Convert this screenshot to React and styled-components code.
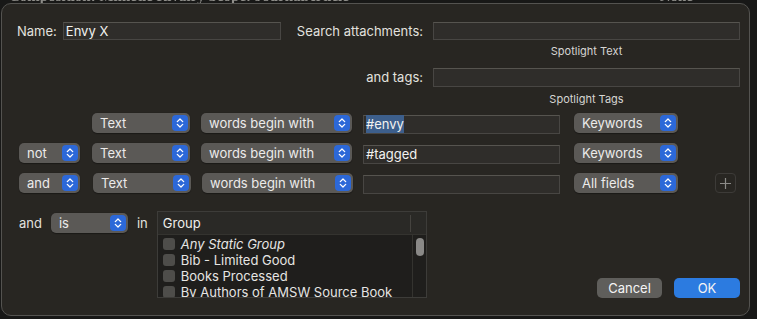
import React from 'react'
import styled, { createGlobalStyle } from 'styled-components'

const Global = createGlobalStyle`
  html, body {
    margin: 0;
    background: #181817;
    font-family: Inter, "Noto Sans", sans-serif;
    font-size: 13px;
    color: #e4e3e1;
    -webkit-font-smoothing: antialiased;
  }
`

const Page = styled.div`
  width: 757px;
  height: 319px;
  overflow: hidden;
`

// the window behind the sheet, only its last pixels show
const BehindStrip = styled.div`
  height: 3px;
  overflow: hidden;
  font-family: "Liberation Serif", serif;
  font-weight: bold;
  font-size: 15px;
  color: #8f8e8a;
  filter: blur(0.4px);
  white-space: nowrap;
`

const BehindLine = styled.div`
  display: flex;
  margin-top: -11px;
  padding-left: 9px;
  line-height: 14px;
  span:last-child {
    margin-left: auto;
    margin-right: 64px;
  }
`

const Sheet = styled.div`
  margin-left: 1px;
  width: 749px;
  height: 313px;
  box-sizing: border-box;
  background: #282622;
  border: 1px solid #545350;
  border-radius: 10px;
  padding: 18px 9px 0 13px;
  display: flex;
  flex-direction: column;
`

const TopGrid = styled.div`
  display: grid;
  grid-template-columns: auto 218px 1fr 307px;
  grid-template-rows: 18px 28px 19px 26px;
  column-gap: 6px;
  margin-left: 2px;
`

const Label = styled.div`
  color: #e2e1df;
  line-height: ${p => p.$lh || 18}px;
  white-space: nowrap;
  text-align: ${p => (p.$right ? 'right' : 'left')};
  padding-right: ${p => p.$pr || 0}px;
`

const Caption = styled.div`
  grid-column: 4;
  font-size: 11px;
  line-height: 14px;
  text-align: center;
  color: #d6d5d2;
  padding-top: ${p => p.$pt}px;
`

const Field = styled.div`
  box-sizing: border-box;
  height: ${p => p.$h || 19}px;
  margin-top: ${p => p.$mt || 0}px;
  background: #2f2d2a;
  border: 1px solid #484643;
  border-top-color: #56544f;
  padding: 0 2px;
  line-height: ${p => (p.$h || 19) - 2}px;
  color: #f2f2f0;
  font-size: 13px;
  white-space: nowrap;
`

const Selected = styled.span`
  background: #3d5f8c;
  padding: 1px 0;
`

const Criteria = styled.div`
  display: flex;
  flex-direction: column;
  gap: 10px;
  margin-left: 4px;
`

const CritRow = styled.div`
  display: flex;
  align-items: flex-start;
  height: 20px;
`

const Slot = styled.div`
  width: ${p => p.$w}px;
  margin-left: ${p => p.$ml || 0}px;
  flex: none;
`

const PopupBox = styled.div`
  box-sizing: border-box;
  width: ${p => p.$w}px;
  height: 20px;
  margin-top: ${p => p.$mt || 0}px;
  border-radius: 5px;
  background: #5b5956;
  box-shadow: 0 0.5px 1px rgba(0, 0, 0, 0.35);
  display: flex;
  align-items: center;
  justify-content: space-between;
  padding: 0 2px 0 8px;
  color: #ecebea;
  font-size: 13px;
  white-space: nowrap;
  flex: none;
`

const Stepper = () => (
  <svg width="16" height="16" viewBox="0 0 16 16">
    <rect x="0" y="0" width="16" height="16" rx="4" fill="#2c68d8" />
    <path d="M5.3 6.6 L8 4 L10.7 6.6" fill="none" stroke="#fff" strokeWidth="1.3" strokeLinecap="round" strokeLinejoin="round" />
    <path d="M5.3 9.4 L8 12 L10.7 9.4" fill="none" stroke="#fff" strokeWidth="1.3" strokeLinecap="round" strokeLinejoin="round" />
  </svg>
)

const Popup = ({ w, mt, children }) => (
  <PopupBox $w={w} $mt={mt}>
    <span>{children}</span>
    <Stepper />
  </PopupBox>
)

const PlusButton = styled.div`
  box-sizing: border-box;
  width: 21px;
  height: 20px;
  margin-left: 37px;
  border: 1px solid #3d3b38;
  border-radius: 4px;
  display: flex;
  align-items: center;
  justify-content: center;
`

const Bottom = styled.div`
  display: flex;
  align-items: flex-start;
  margin-top: 18px;
  margin-left: 4px;
`

const Table = styled.div`
  box-sizing: border-box;
  width: 270px;
  height: 87px;
  margin-left: 9px;
  border: 1px solid #3d3c39;
  background: #1f1e1c;
  display: flex;
  flex-direction: column;
  overflow: hidden;
`

const Header = styled.div`
  height: 22px;
  flex: none;
  background: #2a2926;
  border-bottom: 1px solid #34332f;
  display: flex;
  align-items: center;
  padding-left: 5px;
  color: #f0efed;
  span {
    flex: 1;
  }
  &::after {
    content: '';
    width: 1px;
    height: 17px;
    background: #45433f;
    margin-right: 15px;
  }
`

const Body = styled.div`
  display: flex;
  flex: 1;
`

const Rows = styled.div`
  flex: 1;
  padding-top: 1px;
`

const Row = styled.div`
  height: 16px;
  display: flex;
  align-items: center;
  padding-left: 5px;
  gap: 6px;
  color: #e6e5e3;
  font-style: ${p => (p.$italic ? 'italic' : 'normal')};
  white-space: nowrap;
`

const Check = styled.div`
  width: 12px;
  height: 12px;
  border-radius: 3px;
  background: #4e4d4a;
  flex: none;
`

const Track = styled.div`
  width: 14px;
  border-left: 1px solid #34332f;
  padding: 3px 0 0 3px;
  box-sizing: border-box;
`

const Thumb = styled.div`
  width: 8px;
  height: 18px;
  border-radius: 4px;
  background: #8a8987;
`

const Actions = styled.div`
  margin-left: auto;
  align-self: flex-end;
  display: flex;
  gap: 12px;
`

const Button = styled.div`
  box-sizing: border-box;
  width: ${p => p.$w}px;
  height: 20px;
  border-radius: 5px;
  background: ${p => (p.$primary ? '#2c7be0' : '#5f5e5b')};
  color: #f4f4f4;
  display: flex;
  align-items: center;
  justify-content: center;
  font-size: 13px;
`

const InLabel = styled(Label)`
  margin-left: 9px;
`

const TagsLabel = styled(Label)`
  grid-column: 3;
`

const groups = [
  { name: 'Any Static Group', italic: true },
  { name: 'Bib - Limited Good' },
  { name: 'Books Processed' },
  { name: 'By Authors of AMSW Source Book' },
]

export default function App() {
  return (
    <Page>
      <Global />
      <BehindStrip>
        <BehindLine>
          <span>Composition: Mimetic Rivalry Scope: JournalArticle</span>
          <span>None</span>
        </BehindLine>
      </BehindStrip>
      <Sheet>
        <TopGrid>
          <Label>Name:</Label>
          <Field $h={18}>Envy X</Field>
          <Label $right $pr={4}>Search attachments:</Label>
          <Field $h={18} />
          <Caption $pt={4}>Spotlight Text</Caption>
          <TagsLabel $right $pr={4} $lh={19}>and tags:</TagsLabel>
          <Field />
          <Caption $pt={5}>Spotlight Tags</Caption>
        </TopGrid>

        <Criteria>
          <CritRow>
            <Slot $w={61} />
            <Slot $w={98} $ml={12}><Popup w={98}>Text</Popup></Slot>
            <Slot $w={151} $ml={11}><Popup w={151}>words begin with</Popup></Slot>
            <Slot $w={197} $ml={11}><Field $mt={2}><Selected>#envy</Selected></Field></Slot>
            <Slot $w={104} $ml={14}><Popup w={104}>Keywords</Popup></Slot>
          </CritRow>
          <CritRow>
            <Popup w={61}>not</Popup>
            <Slot $w={98} $ml={12}><Popup w={98}>Text</Popup></Slot>
            <Slot $w={151} $ml={11}><Popup w={151}>words begin with</Popup></Slot>
            <Slot $w={197} $ml={11}><Field $mt={2}>#tagged</Field></Slot>
            <Slot $w={104} $ml={14}><Popup w={104}>Keywords</Popup></Slot>
          </CritRow>
          <CritRow>
            <Popup w={61}>and</Popup>
            <Slot $w={98} $ml={13}><Popup w={98}>Text</Popup></Slot>
            <Slot $w={151} $ml={11}><Popup w={151}>words begin with</Popup></Slot>
            <Slot $w={197} $ml={10}><Field $mt={2} /></Slot>
            <Slot $w={104} $ml={14}><Popup w={104}>All fields</Popup></Slot>
            <PlusButton>
              <svg width="13" height="13" viewBox="0 0 13 13">
                <path d="M6.5 1 V12 M1 6.5 H12" stroke="#8c8b88" strokeWidth="1.2" />
              </svg>
            </PlusButton>
          </CritRow>
        </Criteria>

        <Bottom>
          <Label $lh={24}>and</Label>
          <Slot $w={77} $ml={9}><Popup w={77} mt={2}>is</Popup></Slot>
          <InLabel $lh={24}>in</InLabel>
          <Table>
            <Header><span>Group</span></Header>
            <Body>
              <Rows>
                {groups.map(g => (
                  <Row key={g.name} $italic={g.italic}>
                    <Check />
                    {g.name}
                  </Row>
                ))}
              </Rows>
              <Track><Thumb /></Track>
            </Body>
          </Table>
          <Actions>
            <Button $w={65}>Cancel</Button>
            <Button $w={66} $primary>OK</Button>
          </Actions>
        </Bottom>
      </Sheet>
    </Page>
  )
}
